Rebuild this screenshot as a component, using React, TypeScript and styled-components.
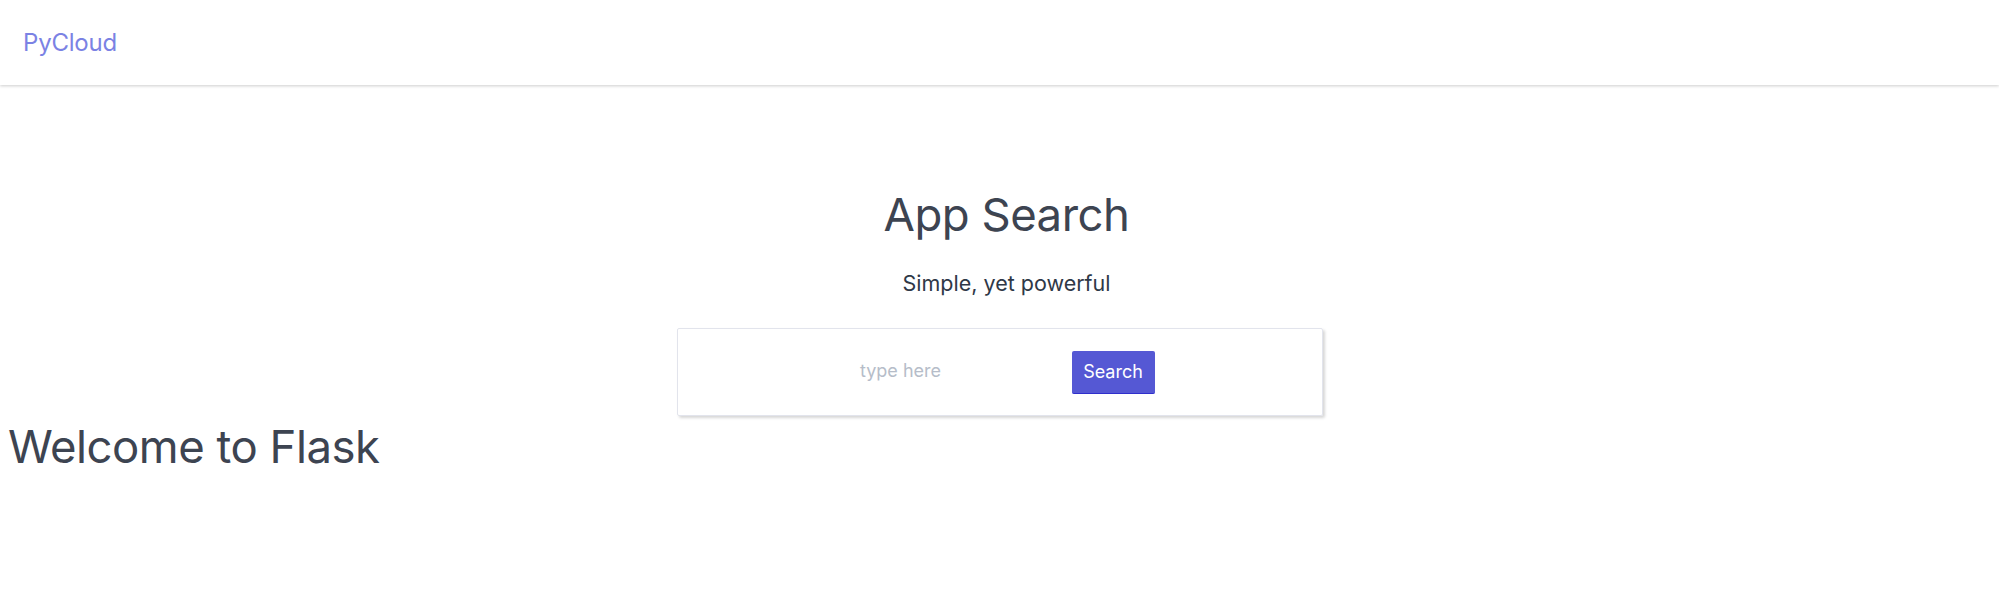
import React from 'react';
import styled, { createGlobalStyle } from 'styled-components';

const GlobalStyle = createGlobalStyle`
  html, body {
    margin: 0;
    padding: 0;
    background: #ffffff;
    font-family: Inter, "Noto Sans", "Liberation Sans", sans-serif;
    color: #3d4451;
  }
`;

const Nav = styled.nav`
  height: 85px;
  display: flex;
  align-items: center;
  padding-left: 23px;
  box-shadow: 0 1px 3px rgba(0, 0, 0, 0.2);
`;

const Brand = styled.a`
  font-size: 24px;
  color: #7b82e4;
  text-decoration: none;
  letter-spacing: -0.2px;
`;

const Hero = styled.section`
  display: flex;
  flex-direction: column;
  align-items: center;
  padding-top: 103px;
`;

const Heading = styled.div`
  display: flex;
  flex-direction: column;
  align-items: center;
  padding-left: 14px;
`;

const Title = styled.h1`
  margin: 0;
  font-size: 45.5px;
  font-weight: 400;
  line-height: 1.2;
  letter-spacing: -0.5px;
`;

const Subtitle = styled.p`
  margin: 28px 0 0;
  font-size: 21.5px;
  line-height: 1.2;
  color: #2f3847;
`;

const SearchBox = styled.form`
  margin-top: 32px;
  width: 646px;
  height: 88px;
  box-sizing: border-box;
  border: 1px solid #e2e4ec;
  border-radius: 2px;
  box-shadow: 2px 2px 3px rgba(0, 0, 0, 0.16);
  display: flex;
  align-items: center;
  padding-left: 52px;
`;

const Field = styled.input`
  width: 342px;
  border: none;
  outline: none;
  background: transparent;
  font-family: inherit;
  font-size: 18px;
  text-align: center;
  margin-top: -3px;
  padding: 0;
  color: #3d4451;
  &::placeholder {
    color: #b6bdc9;
  }
`;

const Button = styled.button`
  width: 83px;
  height: 43px;
  border: none;
  border-bottom: 1px solid #2f2fcc;
  border-radius: 2px;
  background: #5558d4;
  color: #ffffff;
  font-family: inherit;
  font-size: 18px;
  padding: 0;
  cursor: pointer;
`;

const Welcome = styled.h1`
  margin: 4px 0 0;
  padding-left: 8px;
  font-size: 45.5px;
  font-weight: 400;
  line-height: 1.2;
  letter-spacing: -0.5px;
`;

export default function App() {
  return (
    <>
      <GlobalStyle />
      <Nav>
        <Brand href="#">PyCloud</Brand>
      </Nav>
      <Hero>
        <Heading>
          <Title>App Search</Title>
          <Subtitle>Simple, yet powerful</Subtitle>
        </Heading>
        <SearchBox onSubmit={e => e.preventDefault()}>
          <Field type="text" placeholder="type here" />
          <Button type="submit">Search</Button>
        </SearchBox>
      </Hero>
      <Welcome>Welcome to Flask</Welcome>
    </>
  );
}
